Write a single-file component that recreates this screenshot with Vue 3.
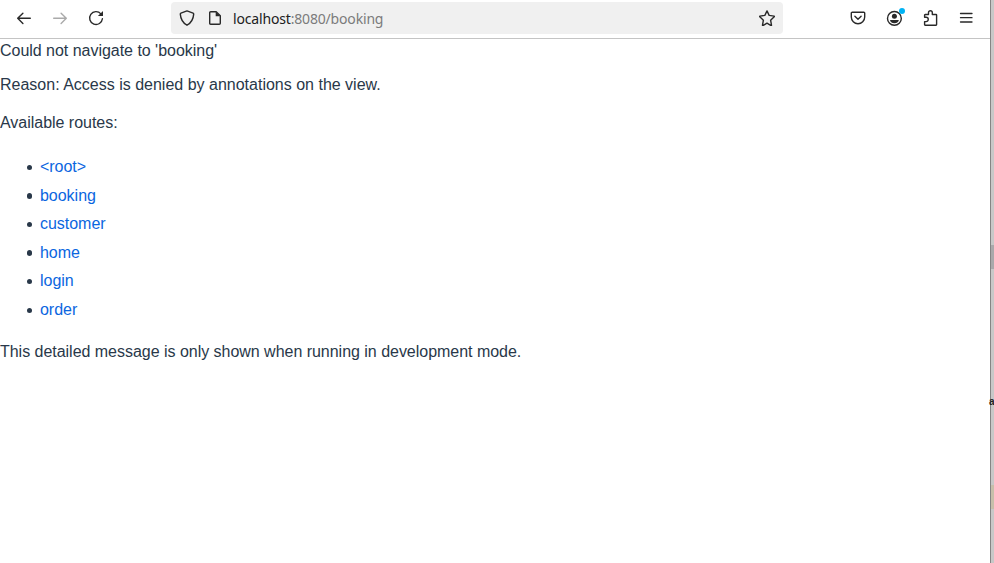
<script setup>
const routes = ['<root>', 'booking', 'customer', 'home', 'login', 'order']
</script>

<template>
  <div class="screen">
    <div class="window">
      <header class="toolbar">
        <nav class="nav">
          <svg class="icon" viewBox="0 0 16 16"><path d="M14.300 8.300H1.900M6.900 3.200 1.700 8.300l5.200 5.100" /></svg>
          <svg class="icon disabled" viewBox="0 0 16 16"><path d="M1.700 8.300h12.400M9.100 3.200l5.200 5.100-5.200 5.100" /></svg>
          <svg class="icon" viewBox="0 0 16 16"><path d="M12.900 3.900A6.400 6.400 0 1 0 14.400 8.700" /><path class="solid" d="M15 1v4.600q0 .5-.5.5H9.900z" /></svg>
        </nav>
        <div class="address">
          <svg class="icon" viewBox="0 0 16 16"><path d="M8 .9 14.100 3.100q.7.300.6 1C14.300 9.500 12 13 8 15.200 4 13 1.700 9.500 1.300 4.100q-.1-.7.600-1z" /></svg>
          <svg class="icon page" viewBox="0 0 16 16"><path d="M3.700 1.700h5.500l4.100 4.100v7.500q0 1-1 1H3.700q-1 0-1-1V2.700q0-1 1-1z" /><path class="solid" d="M8.700 1.500v4.800h4.800z" /></svg>
          <span class="url"><b>localhost</b>:8080/booking</span>
          <svg class="icon star" viewBox="0 0 16 16"><path d="m8 .9 2.150 4.500 4.950.7q.6.200.1.700L11.600 10.200l.9 5q0 .6-.5.400L8 13.200 4 15.600q-.5.200-.5-.4l.9-5L.8 6.800q-.5-.5.100-.7l4.950-.7z" /></svg>
        </div>
        <div class="actions">
          <svg class="icon" viewBox="0 0 16 16"><path d="M2.200 2.200h11.600q.9 0 .9.900V7A6.700 6.700 0 0 1 1.300 7V3.100q0-.9.900-.9zM4.900 6.300 8 9.300l3.100-3" /></svg>
          <span class="account">
            <svg class="icon" viewBox="0 0 16 16"><circle cx="8.400" cy="8.400" r="6.900" /><circle class="solid" cx="8.400" cy="6.200" r="2.500" /><path class="solid" d="M4 10h8.800q-.3 3-4.400 3.300Q4.300 13 4 10z" /></svg>
            <i class="badge"></i>
          </span>
          <svg class="icon" viewBox="0 0 16 16"><path d="M2.600 7.300V5.100q0-.6.600-.6h3.300V2.600a1.900 1.900 0 0 1 3.800 0v1.900h3.700q.6 0 .6.600v9.500q0 .6-.6.600H3.200q-.6 0-.6-.6v-3h1.500a2.100 2.100 0 0 0 0-4.300z" /></svg>
          <svg class="icon menu" viewBox="0 0 16 16"><path d="M2.500 3.500h11.500M2.500 7.700h11.500M2.500 12h11.500" /></svg>
        </div>
      </header>
      <main class="content">
        <div class="title">Could not navigate to 'booking'</div>
        <div class="reason">Reason: Access is denied by annotations on the view.</div>
        <p>Available routes:</p>
        <ul>
          <li v-for="route in routes" :key="route"><a href="#">{{ route }}</a></li>
        </ul>
        <p>This detailed message is only shown when running in development mode.</p>
      </main>
    </div>
    <aside class="edge">
      <i class="thumb"></i>
      <span class="letter">a</span>
      <i class="tan"></i>
    </aside>
  </div>
</template>

<style>
body { margin: 0; overflow: hidden; }
</style>

<style scoped>
.screen { display: flex; width: 994px; height: 563px; background: #fff; overflow: hidden; }
.window { width: 990px; flex: none; }
.toolbar { box-sizing: border-box; display: flex; height: 39px; border-bottom: 1px solid #c4c4c4; padding: 2px 16px 4px; }
.nav, .actions { display: flex; align-items: center; gap: 20px; }
.nav { width: 155px; }
.icon { display: block; flex: none; width: 16px; height: 16px; fill: none; stroke: #292929; stroke-width: 1.400; stroke-linecap: round; stroke-linejoin: round; }
.icon .solid { fill: #292929; stroke: none; }
.disabled { stroke: #aaa; }
.address { box-sizing: border-box; display: flex; align-items: center; width: 612px; height: 32px; padding: 0 8px; border-radius: 4px; background: #f0f0f0; }
.page { margin-left: 12px; }
.url { margin: 2px 0 0 10px; font: 14px/20px "Noto Sans", sans-serif; letter-spacing: -0.170px; color: #7b7b7b; white-space: nowrap; }
.url b { font-weight: 400; color: #202020; }
.star { margin-left: auto; }
.actions { margin-left: auto; }
.menu { stroke-width: 1.300; }
.account { position: relative; }
.badge { position: absolute; top: -2px; right: -3px; width: 6px; height: 6px; border-radius: 50%; background: #00b3f4; }
.content { font: 16px/26px "Liberation Sans", sans-serif; letter-spacing: -0.025px; color: #293849; }
.title { margin-top: -1px; }
.reason { margin-top: 8px; letter-spacing: 0; }
p { margin: 12px 0 0; }
ul { margin: 17px 0 0; padding: 0 0 0 26px; line-height: 28.600px; list-style: none; }
li { display: flex; align-items: center; }
li::before { content: ""; width: 5.500px; height: 5.500px; margin: 0 8px 0 .5px; border-radius: 50%; background: #293849; }
ul + p { margin-top: 14px; }
a { color: #0b66df; text-decoration: none; }
.edge { box-sizing: border-box; display: flex; flex-direction: column; width: 4px; height: 563px; border-left: 1px solid #858585; background: #c8c8c8; }
.thumb { height: 24px; margin-top: 245px; background: #aaa9ab; flex: none; }
.letter { width: 5px; height: 20px; margin: 123px 0 0 -2px; font: 10px/20px "Liberation Sans", sans-serif; font-weight: 700; letter-spacing: -1px; color: #222; flex: none; }
.tan { height: 24px; margin-top: 73px; background: #c7bfaa; flex: none; }
</style>
